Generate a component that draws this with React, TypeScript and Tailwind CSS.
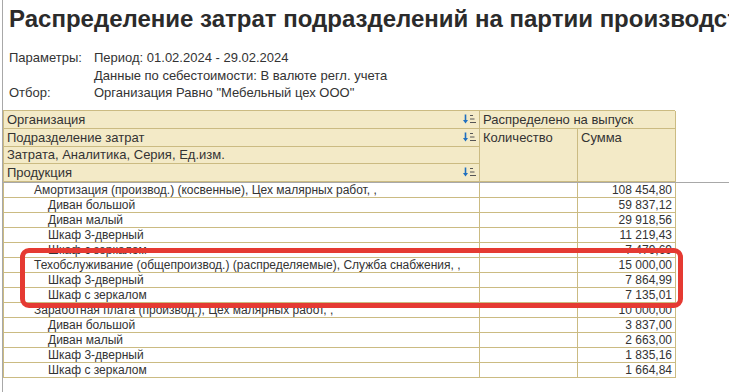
import React from "react";

const SortIcon = () => (
  <svg width="14" height="10" viewBox="0 0 14 10" className="shrink-0">
    <path d="M2.5 0.5 V7" stroke="#1f6fbf" strokeWidth="1.6" />
    <path d="M0 6 L2.5 9.5 L5 6 Z" fill="#1f6fbf" />
    <path d="M7 1.5 H10 M7 5 H11.5 M7 8.5 H13" stroke="#555" strokeWidth="1" />
  </svg>
);

type Row = { text: string; level: 1 | 2; sum: string };

const rows: Row[] = [
  { text: "Амортизация (производ.) (косвенные), Цех малярных работ, ,", level: 1, sum: "108 454,80" },
  { text: "Диван большой", level: 2, sum: "59 837,12" },
  { text: "Диван малый", level: 2, sum: "29 918,56" },
  { text: "Шкаф 3-дверный", level: 2, sum: "11 219,43" },
  { text: "Шкаф с зеркалом", level: 2, sum: "7 479,69" },
  { text: "Техобслуживание (общепроизвод.) (распределяемые), Служба снабжения, ,", level: 1, sum: "15 000,00" },
  { text: "Шкаф 3-дверный", level: 2, sum: "7 864,99" },
  { text: "Шкаф с зеркалом", level: 2, sum: "7 135,01" },
  { text: "Заработная плата (производ.), Цех малярных работ, ,", level: 1, sum: "10 000,00" },
  { text: "Диван большой", level: 2, sum: "3 837,00" },
  { text: "Диван малый", level: 2, sum: "2 663,00" },
  { text: "Шкаф 3-дверный", level: 2, sum: "1 835,16" },
  { text: "Шкаф с зеркалом", level: 2, sum: "1 664,84" },
];

export default function App() {
  const cell = "border-r border-b border-[#cbbb82]";
  const hdr = "bg-[#f3eac7] " + cell;
  return (
    <div
      className="relative w-[729px] h-[392px] overflow-hidden bg-white text-[#333]"
      style={{ fontFamily: '"Liberation Sans", Arial, sans-serif' }}
    >
      <div className="ml-[2px] h-full border-l border-[#a8a8a8]">
        <div className="pt-[5px] pl-[6px] text-[24px] font-bold leading-[27px] whitespace-nowrap text-[#2b2b2b]">
          Распределение затрат подразделений на партии производства
        </div>
        <div className="mt-[17px] pl-[6px] text-[13px] leading-[17.5px]">
          <div className="flex">
            <div className="w-[85px]">Параметры:</div>
            <div>Период: 01.02.2024 - 29.02.2024</div>
          </div>
          <div className="flex">
            <div className="w-[85px]"></div>
            <div>Данные по себестоимости: В валюте регл. учета</div>
          </div>
          <div className="flex">
            <div className="w-[85px]">Отбор:</div>
            <div>Организация Равно "Мебельный цех ООО"</div>
          </div>
        </div>

        <div className="mt-[8px] border-b border-[#a8a8a8]">
          <div className="grid w-[672px] grid-cols-[476px_98px_98px] grid-rows-[18px_18px_17px_18px] border-t border-l border-[#cbbb82] text-[13px] leading-[15px]">
            <div className={hdr + " flex items-center justify-between pl-[3px] pr-[2px]"}>
              <span>Организация</span>
              <SortIcon />
            </div>
            <div className={hdr + " col-span-2 flex items-center pl-[3px]"}>Распределено на выпуск</div>
            <div className={hdr + " flex items-center justify-between pl-[3px] pr-[2px]"}>
              <span>Подразделение затрат</span>
              <SortIcon />
            </div>
            <div className={hdr + " row-span-3 pl-[3px] pt-[1px]"}>Количество</div>
            <div className={hdr + " row-span-3 pl-[3px] pt-[1px]"}>Сумма</div>
            <div className={hdr + " flex items-center pl-[3px]"}>Затрата, Аналитика, Серия, Ед.изм.</div>
            <div className={hdr + " flex items-center justify-between pl-[3px] pr-[2px]"}>
              <span>Продукция</span>
              <SortIcon />
            </div>
          </div>
        </div>

        <div className="grid w-[672px] grid-cols-[476px_98px_98px] border-l border-[#cbbb82] text-[12px] leading-[14px]">
          {rows.map((r, i) => (
            <React.Fragment key={i}>
              <div
                className={
                  cell +
                  " h-[15px] whitespace-nowrap overflow-hidden " +
                  (r.level === 1 ? "pl-[30px]" : "pl-[44px]")
                }
              >
                {r.text}
              </div>
              <div className={cell + " h-[15px]"}></div>
              <div className={cell + " h-[15px] text-right pr-[3px]"}>{r.sum}</div>
            </React.Fragment>
          ))}
        </div>
      </div>

      <div className="absolute left-[20px] top-[248px] w-[663px] h-[60px] rounded-[9px] border-[5px] border-[#e53a32]"></div>
    </div>
  );
}
